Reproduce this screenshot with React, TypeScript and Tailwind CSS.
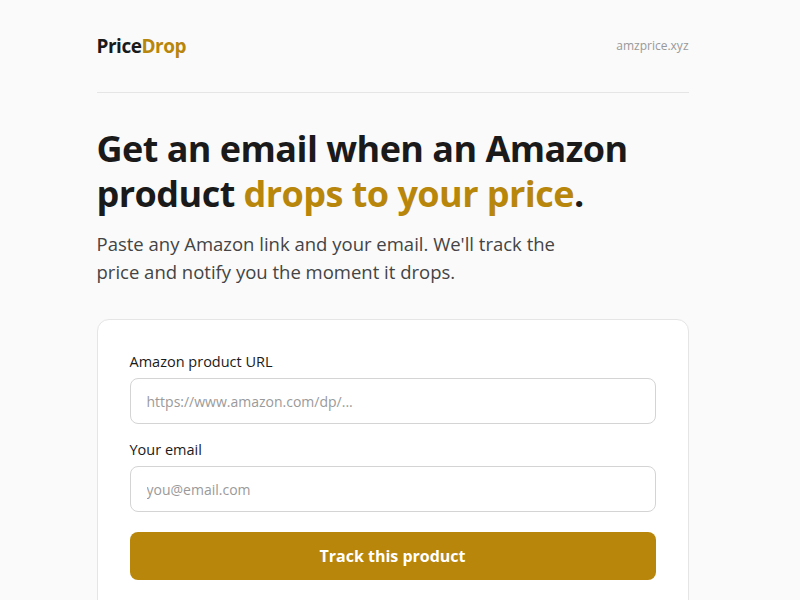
import { useState } from 'react';

const font = { fontFamily: '"Open Sans", "Noto Sans", sans-serif' };

function Field({
  label,
  placeholder,
  type = 'text',
}: {
  label: string;
  placeholder: string;
  type?: string;
}) {
  const [value, setValue] = useState('');
  return (
    <label className="flex flex-col gap-1.5">
      <span className="text-[14.5px] leading-5 text-[#1a1a1a]">{label}</span>
      <input
        type={type}
        value={value}
        onChange={(e) => setValue(e.target.value)}
        placeholder={placeholder}
        className="h-[46px] w-full rounded-lg border border-[#d4d4d4] bg-white px-4 text-[14px] text-[#1a1a1a] outline-none placeholder:text-[#9a9a9a] focus:border-[#b8860b]"
      />
    </label>
  );
}

const STEPS = [
  { title: 'Paste a link', body: 'Drop in any Amazon product page. We read the current price right away.' },
  { title: 'Set your price', body: 'Tell us the price you want to pay, or let us alert you on any drop.' },
  { title: 'Get the email', body: 'We check prices several times a day and email you as soon as it hits.' },
];

export default function App() {
  return (
    <div className="min-h-screen bg-[#fafafa] pr-[15px] text-[#1a1a1a]" style={font}>
      <div className="mx-auto w-[592px]">
        {/* Header */}
        <header className="flex items-center justify-between border-b border-[#e5e5e5] py-8">
          <span className="text-[19px] font-bold leading-7 tracking-tight">
            Price<span className="text-[#b8860b]">Drop</span>
          </span>
          <span className="text-[12px] text-[#999]">amzprice.xyz</span>
        </header>

        {/* Hero */}
        <section className="pt-[33px]">
          <h1 className="text-[36px] font-bold leading-[45px] tracking-[-0.015em]">
            Get an email when an Amazon product{' '}
            <span className="text-[#b8860b]">drops to your price</span>.
          </h1>
          <p className="mt-[14px] max-w-[480px] text-[18.5px] leading-7 text-[#444]">
            Paste any Amazon link and your email. We'll track the price and notify you the moment it drops.
          </p>
        </section>

        {/* Form card */}
        <form
          className="mt-[33px] flex flex-col rounded-xl border border-[#e5e5e5] bg-white p-8"
          onSubmit={(e) => e.preventDefault()}
        >
          <div className="flex flex-col gap-4">
            <Field label="Amazon product URL" placeholder="https://www.amazon.com/dp/..." />
            <Field label="Your email" placeholder="you@email.com" type="email" />
          </div>
          <button
            type="submit"
            className="mt-5 h-12 rounded-lg bg-[#b8860b] text-[16px] font-bold text-white"
          >
            Track this product
          </button>
          <p className="mt-6 text-center text-[13px] text-[#999]">Free. No account needed. Unsubscribe anytime.</p>
        </form>

        {/* How it works */}
        <section className="mt-16">
          <h2 className="text-[22px] font-bold">How it works</h2>
          <div className="mt-6 flex flex-col gap-4">
            {STEPS.map((s, i) => (
              <div key={s.title} className="flex gap-4 rounded-xl border border-[#e5e5e5] bg-white p-6">
                <span className="flex h-8 w-8 shrink-0 items-center justify-center rounded-full bg-[#b8860b] text-[14px] font-bold text-white">
                  {i + 1}
                </span>
                <div>
                  <h3 className="text-[16px] font-bold">{s.title}</h3>
                  <p className="mt-1 text-[14px] leading-6 text-[#555]">{s.body}</p>
                </div>
              </div>
            ))}
          </div>
        </section>

        <section className="mt-16">
          <h2 className="text-[22px] font-bold">Questions</h2>
          <div className="mt-6 flex flex-col gap-6 text-[14px] leading-6 text-[#555]">
            <p>
              <strong className="text-[#1a1a1a]">Is it really free?</strong> Yes. We earn a small commission if you
              buy through our link.
            </p>
            <p>
              <strong className="text-[#1a1a1a]">How often do you check?</strong> Every few hours, for as long as you
              keep tracking.
            </p>
          </div>
        </section>

        <footer className="mt-20 border-t border-[#e5e5e5] py-8 text-[12px] text-[#999]">
          © PriceDrop · amzprice.xyz
        </footer>
      </div>
    </div>
  );
}
